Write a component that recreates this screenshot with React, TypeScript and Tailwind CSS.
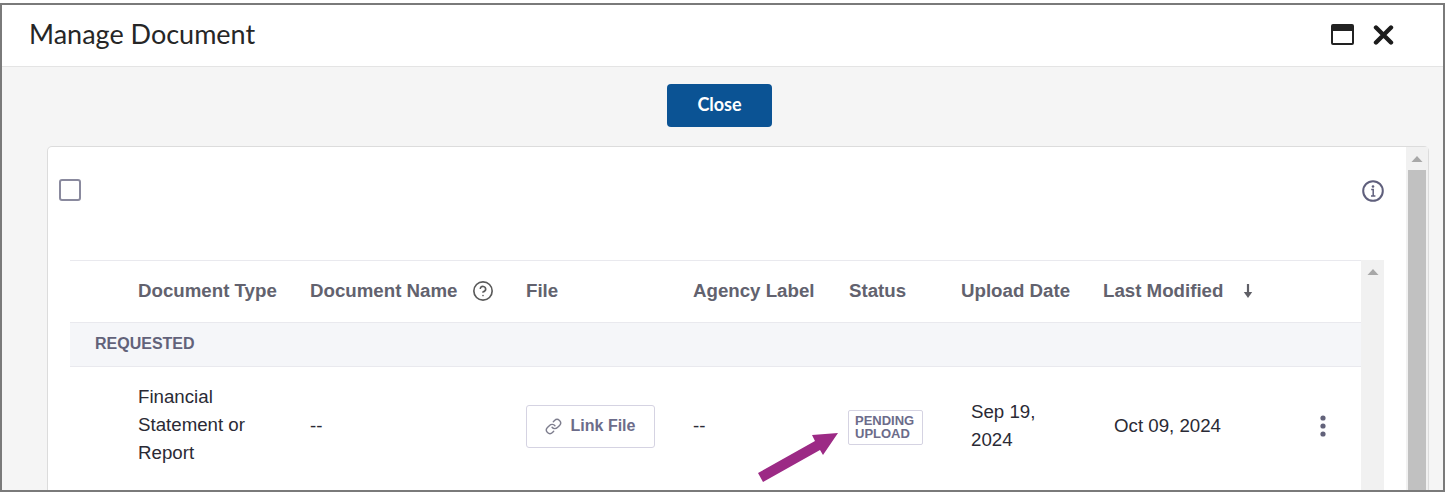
import { CircleHelp, Link } from "lucide-react";

const sans = "font-['Liberation_Sans',Arial,sans-serif]";

const ScrollArrow = () => (
  <svg width="12" height="6" viewBox="0 0 12 6" aria-hidden="true">
    <path d="M6 0l5.5 6H.5z" fill="#a8a8a8" />
  </svg>
);

const WindowIcon = () => (
  <svg width="23" height="21" viewBox="0 0 23 21" aria-hidden="true">
    <rect x="1" y="1" width="21" height="19" rx="1" fill="none" stroke="#222" strokeWidth="2" />
    <rect x="1" y="1" width="21" height="6" fill="#222" />
  </svg>
);

const CloseIcon = () => (
  <svg width="21" height="20" viewBox="0 0 21 20" aria-hidden="true">
    <path d="M3 2.5l15 15M18 2.5l-15 15" stroke="#1c1c1c" strokeWidth="4.4" strokeLinecap="round" />
  </svg>
);

const InfoIcon = () => (
  <svg width="22" height="22" viewBox="0 0 22 22" className="mt-[1px]" aria-hidden="true">
    <circle cx="11" cy="11" r="9.8" fill="none" stroke="#5f5f7c" strokeWidth="2" />
    <circle cx="11" cy="6.5" r="1.3" fill="#5f5f7c" />
    <path d="M9.2 9.6H11.2V15.6M9 15.9h4.4" fill="none" stroke="#5f5f7c" strokeWidth="1.5" />
  </svg>
);

const SortIcon = () => (
  <svg width="10" height="14" viewBox="0 0 10 14" aria-hidden="true">
    <path d="M5 0v10" stroke="#5f5f66" strokeWidth="2.2" />
    <path d="M0.8 8L5 14l4.2-6z" fill="#5f5f66" />
  </svg>
);

const KebabIcon = () => (
  <svg width="8" height="22" viewBox="0 0 8 22" aria-hidden="true">
    <circle cx="4" cy="3" r="2.6" fill="#62627a" />
    <circle cx="4" cy="11" r="2.6" fill="#62627a" />
    <circle cx="4" cy="19" r="2.6" fill="#62627a" />
  </svg>
);

export default function App() {
  return (
    <div className="h-[492px] w-[1447px] overflow-hidden bg-white pt-[3px]">
      <div className="relative flex h-[489px] w-[1445px] flex-col overflow-hidden border-2 border-[#7a7a7a] bg-[#f5f5f5]">
        {/* modal title */}
        <header className="flex h-[62px] shrink-0 items-center justify-between border-b border-[#e4e4e4] bg-white pb-[2px] pl-[27px] pr-[49px]">
          <h1 className="font-['Lato',sans-serif] text-[27px] font-normal text-[#262626]">Manage Document</h1>
          <div className="flex items-center gap-[19px]">
            <WindowIcon />
            <CloseIcon />
          </div>
        </header>

        <div className="flex min-h-0 flex-1 flex-col pl-[45px] pr-[14px]">
          <div className="flex shrink-0 justify-center pr-[37px] pt-[17px]">
            <button
              type="button"
              className="h-[43px] w-[105px] rounded-[4px] bg-[#0b5394] pb-[2px] font-['Lato',sans-serif] text-[18px] font-bold text-white"
            >
              Close
            </button>
          </div>

          <div className="mt-[19px] flex min-h-0 flex-1 rounded-t-[5px] border border-b-0 border-[#dcdcdc] bg-white">
            <div className="flex min-w-0 flex-1 flex-col">
              <div className="flex h-[113px] shrink-0 items-start justify-between pl-[11px] pr-[22px] pt-[32px]">
                <div className="h-[22px] w-[22px] rounded-[3px] border-2 border-[#8a8a9e] bg-white" />
                <InfoIcon />
              </div>

              <div className="flex min-h-0 flex-1 pl-[22px] pr-[22px]">
                <div className={`min-w-0 flex-1 ${sans}`}>
                  <div className="grid h-[63px] grid-cols-[68px_172px_216px_167px_156px_112px_142px_1fr] items-center whitespace-nowrap border-y border-[#e9e9ee] text-[18.7px] font-bold text-[#62626e]">
                    <span />
                    <span>Document Type</span>
                    <span className="flex items-center gap-[15px]">
                      Document Name
                      <CircleHelp size={22} strokeWidth={1.8} className="text-[#5a5a5a]" />
                    </span>
                    <span>File</span>
                    <span>Agency Label</span>
                    <span>Status</span>
                    <span>Upload Date</span>
                    <span className="flex items-center gap-[20px]">
                      Last Modified
                      <SortIcon />
                    </span>
                  </div>

                  <div className="flex h-[44px] items-center border-b border-[#e9e9ee] bg-[#f5f6f9] pb-[2px] pl-[25px] text-[16px] font-bold text-[#62627a]">
                    REQUESTED
                  </div>

                  <div className="grid h-[118px] grid-cols-[68px_172px_216px_167px_156px_112px_142px_1fr] items-center text-[18.7px] leading-[28px] text-[#2a2a35]">
                    <span />
                    <span className="w-[130px] pb-[2px]">Financial Statement or Report</span>
                    <span>--</span>
                    <span>
                      <button
                        type="button"
                        className="flex h-[43px] w-[129px] items-center justify-center gap-[9px] rounded-[3px] border border-[#d5d3e2] bg-white pr-[1px] text-[16px] font-bold text-[#6c6c8a]"
                      >
                        <Link size={17} strokeWidth={2} className="text-[#7e7e8e]" />
                        Link File
                      </button>
                    </span>
                    <span>--</span>
                    <span className="pb-[2px]">
                      <span className="ml-[-1px] inline-flex h-[35px] w-[75px] flex-col justify-center rounded-[2px] border border-[#d5d3e2] pl-[6px] text-[13px] font-bold leading-[13px] text-[#6c6c8a]">
                        <span>PENDING</span>
                        <span>UPLOAD</span>
                      </span>
                    </span>
                    <span className="box-content w-[80px] pl-[10px]">Sep 19, 2024</span>
                    <span className="flex items-center justify-between whitespace-nowrap pl-[11px] pr-[34px]">
                      Oct 09, 2024
                      <KebabIcon />
                    </span>
                  </div>
                </div>

                <div className="flex w-[23px] shrink-0 justify-center bg-[#f1f1f1] pt-[9px]">
                  <ScrollArrow />
                </div>
              </div>
            </div>

            {/* outer scrollbar */}
            <div className="flex w-[22px] shrink-0 flex-col items-center bg-[#f1f1f1] pt-[9px]">
              <ScrollArrow />
              <div className="mt-[8px] w-[18px] flex-1 bg-[#c1c1c1]" />
            </div>
          </div>
        </div>

        {/* callout arrow on top of the screenshot */}
        <svg
          className="absolute left-[-2px] top-[-5px]"
          width="1447"
          height="492"
          viewBox="0 0 1447 492"
          aria-hidden="true"
        >
          <path d="M758 473L815 441L812 435L838 433L823 455L820 450L763 482z" fill="#9c2a85" />
        </svg>
      </div>
    </div>
  );
}
